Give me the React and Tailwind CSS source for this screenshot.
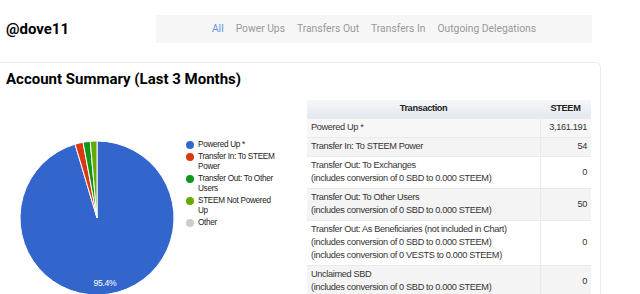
import React from 'react';

const slices = [
  { label: 'Powered Up *', value: 95.4, color: '#3366cc' },
  { label: 'Transfer In: To STEEM Power', value: 1.7, color: '#dc3912' },
  { label: 'Transfer Out: To Other Users', value: 1.5, color: '#109618' },
  { label: 'STEEM Not Powered Up', value: 1.4, color: '#66aa00' },
  { label: 'Other', value: 0, color: '#cccccc' },
];

const rows = [
  { lines: ['Powered Up *'], amount: '3,161.191', bg: 'bg-[#f7f7f7]' },
  { lines: ['Transfer In: To STEEM Power'], amount: '54', bg: 'bg-[#f4f4f4]' },
  { lines: ['Transfer Out: To Exchanges', '(includes conversion of 0 SBD to 0.000 STEEM)'], amount: '0', bg: 'bg-white' },
  { lines: ['Transfer Out: To Other Users', '(includes conversion of 0 SBD to 0.000 STEEM)'], amount: '50', bg: 'bg-[#f4f4f4]' },
  {
    lines: [
      'Transfer Out: As Beneficiaries (not included in Chart)',
      '(includes conversion of 0 SBD to 0.000 STEEM)',
      '(includes conversion of 0 VESTS to 0.000 STEEM)',
    ],
    amount: '0',
    bg: 'bg-white',
  },
  { lines: ['Unclaimed SBD', '(includes conversion of 0 SBD to 0.000 STEEM)'], amount: '0', bg: 'bg-[#f4f4f4]' },
];

const tabs = ['All', 'Power Ups', 'Transfers Out', 'Transfers In', 'Outgoing Delegations'];

function Pie() {
  const cx = 97;
  const cy = 118;
  const r = 77;
  let start = 0;
  const paths = slices
    .filter((s) => s.value > 0)
    .map((s) => {
      const a0 = (start / 100) * Math.PI * 2;
      start += s.value;
      const a1 = (start / 100) * Math.PI * 2;
      const x0 = cx + r * Math.sin(a0);
      const y0 = cy - r * Math.cos(a0);
      const x1 = cx + r * Math.sin(a1);
      const y1 = cy - r * Math.cos(a1);
      const large = a1 - a0 > Math.PI ? 1 : 0;
      return (
        <path
          key={s.label}
          d={`M${cx} ${cy} L${x0} ${y0} A${r} ${r} 0 ${large} 1 ${x1} ${y1} Z`}
          fill={s.color}
          stroke="#fff"
          strokeWidth="1"
        />
      );
    });

  return (
    <svg width="186" height="194" className="shrink-0">
      {paths}
      <text
        x="105"
        y="186"
        fill="#fff"
        fontSize="8.6"
        letterSpacing="-0.3"
        textAnchor="middle"
        fontFamily="Liberation Sans, Arial, sans-serif"
      >
        95.4%
      </text>
    </svg>
  );
}

export default function App() {
  return (
    <div className="w-[640px] h-[294px] overflow-hidden bg-white font-['Roboto',sans-serif]">
      {/* header */}
      <div className="flex items-center pt-[15px]">
        <h1 className="w-[156px] pl-[6px] text-[15px] font-bold text-black">@dove11</h1>
        <nav className="w-[436px] h-[28px] bg-[#f6f6f6] flex items-center justify-center gap-[12px] text-[10.3px] text-[#999]">
          {tabs.map((t, i) => (
            <span key={t} className={i === 0 ? 'text-[#5d9ad6]' : ''}>
              {t}
            </span>
          ))}
        </nav>
      </div>

      {/* summary card */}
      <div className="mt-[19px] w-[601px] border-t border-r border-[#ececec] rounded-tr-[6px] pt-[6px]">
        <h2 className="pl-[6px] text-[15px] leading-[20px] font-bold text-black">Account Summary (Last 3 Months)</h2>

        <div className="flex mt-[11px] font-['Liberation_Sans',Arial,sans-serif]">
          <div className="w-[307px] flex items-start">
            <Pie />
            <ul className="mt-[40px] flex flex-col gap-[2px] text-[8.2px] tracking-[-0.3px] leading-[10px] text-[#222]">
              {slices.map((s) => (
                <li key={s.label} className="flex items-start gap-[4px]">
                  <span className="mt-[1px] w-[8px] h-[8px] rounded-full shrink-0" style={{ backgroundColor: s.color }} />
                  <span className="w-[80px]">{s.label}</span>
                </li>
              ))}
            </ul>
          </div>

          <table className="w-[284px] border-collapse text-[9.2px] tracking-[-0.35px] leading-[13px] text-[#333]">
            <thead>
              <tr className="bg-gradient-to-b from-[#f6f7fb] to-[#e4e7ef]">
                <th className="h-[18px] px-[4px] font-bold text-[#222] text-center">Transaction</th>
                <th className="w-[51px] px-[4px] font-bold text-[#222] text-center">STEEM</th>
              </tr>
            </thead>
            <tbody>
              {rows.map((r, i) => (
                <tr key={i} className={r.bg}>
                  <td className="border border-[#eaeaea] border-l-0 px-[4px] py-[2.5px] text-left">
                    {r.lines.map((l) => (
                      <div key={l}>{l}</div>
                    ))}
                  </td>
                  <td className="border border-[#eaeaea] border-r-0 px-[4px] py-[2.5px] text-right">{r.amount}</td>
                </tr>
              ))}
            </tbody>
          </table>
        </div>
      </div>
    </div>
  );
}
